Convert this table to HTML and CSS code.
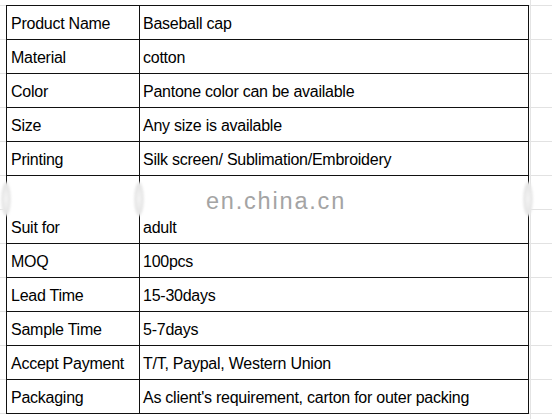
FILE: index.html
```html
<!DOCTYPE html>
<html>
<head>
<meta charset="utf-8">
<link rel="stylesheet" href="styles.css">
</head>
<body>
<div class="sheet">
  <table class="spec">
    <tr><td class="k">Product Name</td><td class="v">Baseball cap</td></tr>
    <tr><td class="k">Material</td><td class="v">cotton</td></tr>
    <tr><td class="k">Color</td><td class="v">Pantone color can be available</td></tr>
    <tr><td class="k">Size</td><td class="v">Any size is available</td></tr>
    <tr><td class="k">Printing</td><td class="v">Silk screen/ Sublimation/Embroidery</td></tr>
    <tr class="tall"><td class="k">Suit for</td><td class="v">adult</td></tr>
    <tr><td class="k">MOQ</td><td class="v">100pcs</td></tr>
    <tr><td class="k">Lead Time</td><td class="v">15-30days</td></tr>
    <tr><td class="k">Sample Time</td><td class="v">5-7days</td></tr>
    <tr><td class="k">Accept Payment</td><td class="v">T/T, Paypal, Western Union</td></tr>
    <tr><td class="k">Packaging</td><td class="v">As client's requirement, carton for outer packing</td></tr>
  </table>
  <div class="smudge s1"></div>
  <div class="smudge s2"></div>
  <div class="smudge s3"></div>
  <div class="watermark">en.china.cn</div>
</div>
</body>
</html>
```

FILE: styles.css
```css
html, body {
  margin: 0;
  padding: 0;
  background: #fff;
}
body {
  width: 552px;
  height: 419px;
  overflow: hidden;
  background-image:
    linear-gradient(90deg, transparent 530px, #e4e4e4 530px, #e4e4e4 531px, transparent 531px),
    repeating-linear-gradient(180deg, #e2e2e2 0, #e2e2e2 1px, transparent 1px, transparent 34px);
  background-position: 0 0, 0 5px;
}
.sheet {
  position: relative;
  padding: 5px 0 0 6px;
}
.spec {
  border-collapse: collapse;
  background: #fff;
  font-family: "Liberation Sans", Arial, sans-serif;
  font-size: 16px;
  letter-spacing: -0.25px;
  color: #000;
}
.spec td {
  border: 1px solid #111;
  height: 33px;
  box-sizing: border-box;
  padding: 0 3px 6px 3px;
  line-height: 18px;
  vertical-align: bottom;
  white-space: nowrap;
}
.spec tr { height: 34px; }
.spec tr.tall { height: 68px; }
.spec tr.tall td { height: 67px; }
.spec .k { width: 133px; padding-left: 4px; }
.spec .v { width: 389px; }
.watermark {
  position: absolute;
  left: 0;
  right: 0;
  top: 188px;
  text-align: center;
  font-family: "Liberation Sans", Arial, sans-serif;
  font-size: 23.5px;
  letter-spacing: 1.8px;
  color: #a4a4a4;
}
.smudge {
  position: absolute;
  top: 182px;
  width: 10px;
  height: 34px;
  border-radius: 50%;
  background: radial-gradient(ellipse at center, #f4f4f4 0%, #e6e6e6 55%, #f6f6f6 100%);
  filter: blur(1px);
}
.s1 { left: 1px; }
.s2 { left: 134px; }
.s3 { left: 523px; }
```
